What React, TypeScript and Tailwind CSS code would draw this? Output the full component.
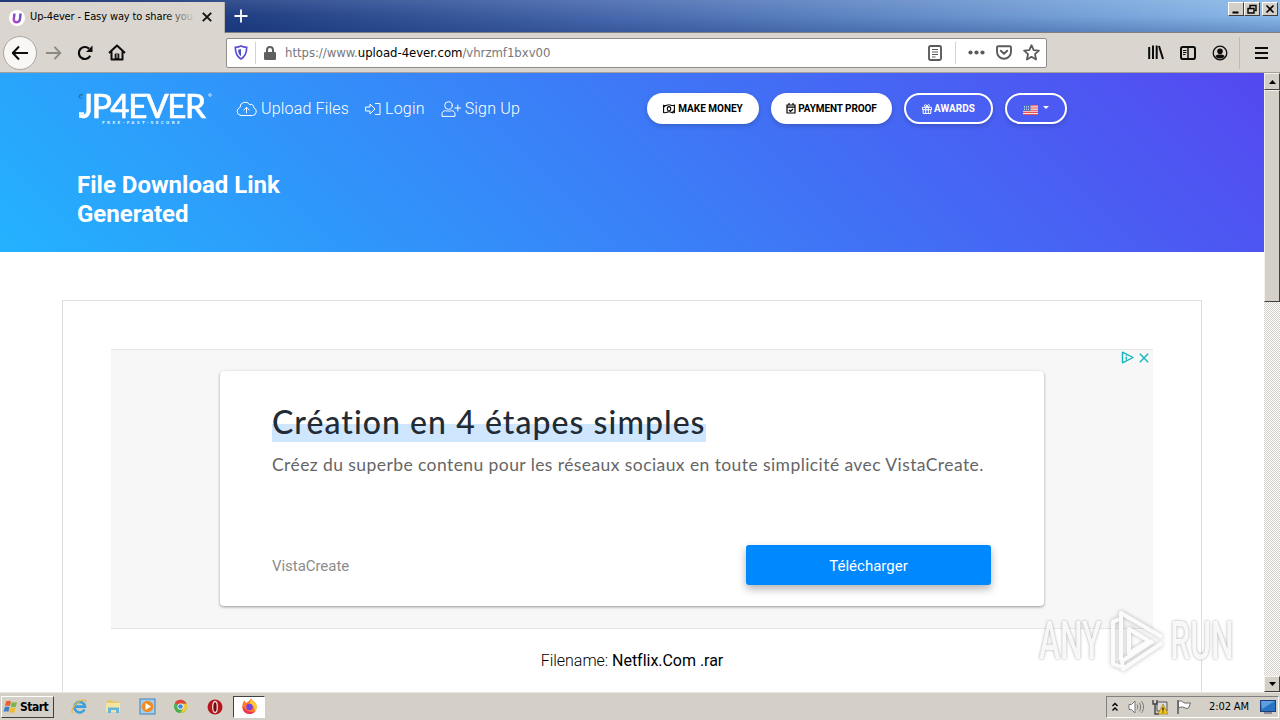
import type { ReactNode } from "react";

const tahoma = "font-['DejaVu_Sans_Condensed','DejaVu_Sans',sans-serif]";

function TabStrip() {
  return (
    <div className="h-[33px] flex shrink-0 bg-linear-to-r from-[#0a246a] via-[#4a6cb0] to-[#8ab9e9]">
      <div className="w-full h-full flex bg-linear-to-b from-white/10 via-transparent to-[#0a246a]/25 border-b border-[#7f7f7f]">
        <div className="w-[225px] h-[31px] mt-[2px] pl-[9px] flex items-center bg-[#dad6cf] border-r border-[#b7b3ab]">
          <div className="w-4 h-4 rounded-full bg-white flex items-center justify-center">
            <svg width="10" height="12" viewBox="0 0 10 12" fill="none">
              <defs>
                <linearGradient id="fav" x1="0" y1="1" x2="1" y2="0">
                  <stop stopColor="#b148c8" />
                  <stop offset="1" stopColor="#5a4fb5" />
                </linearGradient>
              </defs>
              <path d="M2.500 1.500 1.800 7c-.2 2 .8 3.200 2.900 3.200S7.800 9 8 7l.5-5.500" stroke="url(#fav)" strokeWidth="2.400" />
            </svg>
          </div>
          <div className="relative ml-[5px] mb-[2px] w-[166px] whitespace-nowrap">
            <span className={`${tahoma} text-[11px] leading-4 tracking-[-0.12px] text-black block`}>Up-4ever - Easy way to share you</span>
            <div className="absolute right-0 top-0 w-8 h-4 bg-linear-to-r from-transparent to-[#dad6cf]" />
          </div>
          <svg className="ml-[6px] mb-px" width="10" height="10" viewBox="0 0 10 10">
            <path d="M.8.8l8.400 8.400M9.200.8.8 9.200" stroke="#111" strokeWidth="1.900" />
          </svg>
        </div>
        <svg className="ml-[9px] mt-[9px]" width="14" height="14" viewBox="0 0 14 14">
          <path d="M7 .5v13M.5 7h13" stroke="#fff" strokeWidth="1.800" />
        </svg>
        <div className="ml-auto mr-[2px] mt-[2px] flex">
          <WinButton>
            <path d="M3 9.500h6" stroke="#000" strokeWidth="2" />
          </WinButton>
          <WinButton>
            <path d="M4.500 5V2.500h6v5H9M4.500 2.500h6" stroke="#000" strokeWidth="1.400" fill="none" />
            <path d="M2.500 5.500h6v4.500h-6z" stroke="#000" strokeWidth="1.400" fill="none" />
          </WinButton>
          <div className="w-[2px]" />
          <WinButton>
            <path d="M3 2.500l7 7M10 2.500l-7 7" stroke="#000" strokeWidth="1.700" />
          </WinButton>
        </div>
      </div>
    </div>
  );
}

function WinButton({ children }: { children: ReactNode }) {
  return (
    <div className="w-4 h-[14px] bg-[#d4d0c8] border border-t-white border-l-white border-r-[#404040] border-b-[#404040]">
      <svg width="14" height="12" viewBox="0 0 13 12">{children}</svg>
    </div>
  );
}

function Toolbar() {
  return (
    <div className="h-10 shrink-0 bg-[#dad6cf] border-b border-[#a5a19a] flex items-center pl-[3px]">
      <div className="w-[34px] h-[34px] rounded-full bg-[#f8f7f5] border border-[#a9a69f] flex items-center justify-center">
        <svg width="18" height="16" viewBox="0 0 18 16" fill="none" stroke="#0c0c0d" strokeWidth="2">
          <path d="M17 8H2M8 1.500 1.800 8 8 14.500" strokeLinejoin="round" />
        </svg>
      </div>
      <svg className="ml-2" width="17" height="16" viewBox="0 0 18 16" fill="none" stroke="#8c8983" strokeWidth="2">
        <path d="M1 8h15M10 1.500 16.200 8 10 14.500" />
      </svg>
      <svg className="ml-[15px]" width="17" height="16" viewBox="0 0 17 16">
        <path d="M13.200 10.800A6 6 0 1 1 12 3.600" fill="none" stroke="#0c0c0d" strokeWidth="2.200" />
        <path d="M15.500.5v6.500H9z" fill="#0c0c0d" />
      </svg>
      <svg className="ml-[14px]" width="18" height="17" viewBox="0 0 18 17" fill="none" stroke="#0c0c0d" strokeWidth="2">
        <path d="M1 9 9 1.500 17 9M3.500 7.500V15.500h11V7.500" strokeLinejoin="round" />
        <path d="M7.200 15v-5h3.600v5" fill="#0c0c0d" strokeWidth="1" />
        <path d="M9 10v4" stroke="#dad6cf" strokeWidth="1" />
      </svg>
      <div className="ml-[100px] w-[821px] h-[30px] bg-white border border-[#8f8d89] rounded-[2px] flex items-center pl-[7px]">
        <svg width="14" height="15" viewBox="0 0 14 15" fill="none">
          <path d="M7 1c2 1 3.800 1.200 5.700 1.300 0 5-.7 9-5.700 11.600C2 11.300 1.300 7.300 1.300 2.300 3.200 2.200 5 2 7 1z" stroke="#5a4fd0" strokeWidth="1.700" />
          <path d="M7 4v7.300C4.800 9.700 4.200 7.500 4.100 4.700 5.200 4.600 6 4.500 7 4z" fill="#4a50c8" />
        </svg>
        <div className="ml-[7px] w-px h-[22px] bg-[#d3d3d6]" />
        <svg className="ml-2" width="12" height="14" viewBox="0 0 12 14">
          <rect y="6" width="12" height="8" rx="1.200" fill="#5f5f60" />
          <path d="M3 7V4a3 3 0 0 1 6 0v3" fill="none" stroke="#5f5f60" strokeWidth="2" />
        </svg>
        <span className={`${tahoma} ml-[9px] mt-px w-[640px] text-[13px] leading-4 tracking-[-0.03px] text-[#77777a]`}>
          https://www.<span className="text-black">upload-4ever.com</span>/vhrzmf1bxv00
        </span>
        <svg className="ml-[3px]" width="14" height="16" viewBox="0 0 14 16" fill="none" stroke="#5b5b5d">
          <rect x="1" y="1" width="12" height="14" rx="1.500" strokeWidth="1.900" />
          <path d="M4 4.500h6M4 7h6M4 9.500h6M4 12h3.500" strokeWidth="1" />
        </svg>
        <div className="ml-[13px] w-px h-[22px] bg-[#d3d3d6]" />
        <svg className="ml-[12px]" width="17" height="5" viewBox="0 0 17 5" fill="#5b5b5d">
          <circle cx="2.500" cy="2.500" r="2.100" />
          <circle cx="8.500" cy="2.500" r="2.100" />
          <circle cx="14.500" cy="2.500" r="2.100" />
        </svg>
        <svg className="ml-[11px]" width="16" height="15" viewBox="0 0 16 15" fill="none" stroke="#5b5b5d" strokeWidth="1.900" strokeLinecap="round" strokeLinejoin="round">
          <path d="M2.200 1.200h11.600c.7 0 1.200.5 1.200 1.100v4.500a7 7 0 0 1-14 0V2.300c0-.6.500-1.100 1.200-1.100z" />
          <path d="M4.800 5.700 8 8.800l3.200-3.100" />
        </svg>
        <svg className="ml-[11px]" width="17" height="17" viewBox="0 0 17 17" fill="none" stroke="#5b5b5d" strokeWidth="1.800" strokeLinejoin="round">
          <path d="m8.500 1.200 2.200 4.900 5.200.5-3.900 3.600 1.100 5.300-4.600-2.700-4.600 2.700L5 10.200 1.100 6.600l5.200-.5z" />
        </svg>
      </div>
      <svg className="ml-[101px]" width="16" height="15" viewBox="0 0 16 15" stroke="#0c0c0d" strokeWidth="2">
        <path d="M1.200 2v12M5 .5V14M8.700.5V14M11 1l4 13" />
      </svg>
      <svg className="ml-4" width="16" height="14" viewBox="0 0 16 14" fill="none" stroke="#0c0c0d">
        <rect x="1" y="1" width="14" height="12" rx="1.800" strokeWidth="2" />
        <path d="M8 1v12" strokeWidth="1.500" />
        <path d="M3 4.500h3.500M3 6.500h3.500M3 8.500h2.500" strokeWidth="1" />
      </svg>
      <svg className="ml-4" width="16" height="16" viewBox="0 0 16 16">
        <circle cx="8" cy="8" r="6.800" fill="none" stroke="#0c0c0d" strokeWidth="1.300" />
        <circle cx="8" cy="6.200" r="2.800" fill="#0c0c0d" />
        <path d="M3.300 11.500C4 9.800 5.200 9.400 8 9.400s4 .4 4.700 2.100A6 6 0 0 1 8 13.500a6 6 0 0 1-4.700-2z" fill="#0c0c0d" />
      </svg>
      <div className="ml-[11px] w-px h-8 bg-[#bfbbb3]" />
      <svg className="ml-[15px]" width="13" height="12" viewBox="0 0 13 12" stroke="#0c0c0d" strokeWidth="2">
        <path d="M0 1h13M0 6h13M0 11h13" />
      </svg>
    </div>
  );
}

function NavItem({ label, width, children }: { label: string; width: number; children: ReactNode }) {
  return (
    <div className="flex items-center gap-1 mr-4">
      <svg width={width} height="16" viewBox={`0 0 ${width} 16`} fill="none" stroke="#fff" strokeWidth="1" strokeLinejoin="round" strokeLinecap="round">
        {children}
      </svg>
      <span className="text-base leading-6 font-light tracking-[0.18px] text-white whitespace-nowrap">{label}</span>
    </div>
  );
}

function Logo() {
  return (
    <div className="relative w-[134px] h-[34px] pt-px">
      <div className="h-[25px] ml-px origin-left scale-x-[1.04] font-['Lato',sans-serif] text-[32px] leading-[25px] font-medium tracking-[-1.4px] text-white [-webkit-text-stroke:0.5px_white] whitespace-nowrap">
        JP4EVER
      </div>
      <svg className="absolute left-0 top-0" width="134" height="30" viewBox="0 0 134 30">
        <path d="M1 6l1-3 3-.5M3 6.500l1-1" stroke="#2277a8" fill="none" strokeWidth="1.500" />
        <path d="M1 21.500h5" stroke="#fff" strokeWidth="2.500" />
        <circle cx="132" cy="3" r="1.300" fill="none" stroke="#fff" strokeWidth=".7" />
      </svg>
      <div className="ml-[24px] mt-[2px] h-[5px] font-['DejaVu_Sans',sans-serif] font-bold text-[4px] leading-[5px] tracking-[2.350px] text-[#d9f1ff] whitespace-nowrap">
        FREE-FAST-SECURE
      </div>
    </div>
  );
}

const pill = "h-[31px] rounded-full flex items-center justify-center text-[10px] font-bold whitespace-nowrap shadow-[0_2px_5px_rgba(0,0,0,0.18)]";

function Hero() {
  return (
    <header className="h-[179px] shrink-0 bg-[linear-gradient(45deg,#23b2fe_0%,#5448f0_100%)]">
      <div className="h-[71px] pl-[78px] flex items-center">
        <Logo />
        <div className="ml-6 flex items-center w-[411px]">
          <NavItem label="Upload Files" width={21}>
            <path d="M5 14.500h11.500a4 4 0 0 0 1.300-7.700 3 3 0 0 0-4.200-3.200A5.200 5.200 0 0 0 4 6.500a4.100 4.100 0 0 0 1 8zM10.500 12V6.500M7.800 9l2.700-2.700L13.200 9" />
          </NavItem>
          <NavItem label="Login" width={16}>
            <path d="M1 6h4V3l5 5-5 5v-3H1zM10.500 2.500h4.500v11h-4.500" />
          </NavItem>
          <NavItem label="Sign Up" width={20}>
            <circle cx="7.500" cy="4.500" r="3.800" />
            <path d="M1 15v-2.200C1 11 2.500 9.700 4.300 9.700c1 0 1.500.5 3.200.5s2.200-.5 3.200-.5c1.800 0 3.300 1.300 3.300 3.100V15zM16.800 4v6M13.800 7h6" />
          </NavItem>
        </div>
        <div className="flex gap-3">
          <div className={`${pill} w-[112px] bg-white text-black gap-[3px]`}>
            <svg width="12" height="10" viewBox="0 0 12 10" fill="none" stroke="#000" strokeWidth="1.100">
              <path d="M.6 1.500c2 1 3.700-.8 5.500-.7 1.800 0 3.200 1.300 5.300.4v7.300c-2 1-3.600-.8-5.400-.7-1.800 0-3.300 1.600-5.400.7z" />
              <ellipse cx="6" cy="4.800" rx="1.700" ry="2.200" />
              <path d="M.6 3.200 2.500 1.500M9.500 8.200l1.900-1.700" />
            </svg>
            MAKE MONEY
          </div>
          <div className={`${pill} w-[121px] bg-white text-black gap-[2px] tracking-[-0.1px]`}>
            <svg width="10" height="11" viewBox="0 0 10 11" fill="none" stroke="#000" strokeWidth="1.200">
              <path d="M1 2h8v8H1zM1 4.200h8M3 0v2M7 0v2M3 7l1.500 1.500L7 6" />
            </svg>
            PAYMENT PROOF
          </div>
          <div className={`${pill} w-[89px] border-2 border-white text-white gap-[2px]`}>
            <svg width="10" height="10" viewBox="0 0 10 10" fill="none" stroke="#fff" strokeWidth="1">
              <path d="M.5 3.300h9v2.400h-9zM1.200 5.700v3.800h7.600V5.700M3.700 3.300v6.200M6.300 3.300v6.200M5 3.300C2 3.300 2 .6 3.400.6S5 3.300 5 3.300 5.200.6 6.600.6 8 3.300 5 3.300z" />
            </svg>
            AWARDS
          </div>
          <div className={`${pill} w-[62px] border-2 border-white gap-[5px]`}>
            <svg className="mt-[3px]" width="15" height="10" viewBox="0 0 15 10">
              <rect width="15" height="10" fill="#f6e6ea" />
              <path d="M0 .7h15M0 3h15M0 5.200h15M0 7.400h15M0 9.500h15" stroke="#e2504f" strokeWidth="1.100" />
              <rect width="7.500" height="5.800" fill="#3f6fc4" />
              <path d="M1 1.500h6M1 3h6M1 4.500h6" stroke="#d4e6ff" strokeWidth=".8" strokeDasharray="1 1" />
            </svg>
            <svg className="mb-[3px]" width="6" height="3" viewBox="0 0 6 3">
              <path d="M0 0h6L3 3z" fill="#fff" />
            </svg>
          </div>
        </div>
      </div>
      <h1 className="ml-[77px] mt-[27px] w-[230px] text-2xl leading-[29px] font-bold text-white">
        File Download Link Generated
      </h1>
    </header>
  );
}

function Ad() {
  return (
    <div className="h-[280px] bg-[#f7f7f7] border-y border-[#e6e6e6] relative pt-[21px] font-['Lato',sans-serif]">
      <div className="absolute right-[4px] top-px flex items-center gap-[5px]">
        <svg width="13" height="13" viewBox="0 0 13 13" fill="none" stroke="#12b5bd" strokeWidth="1.400">
          <path d="M1.500 1.200v10.600L12 6.500z" strokeLinejoin="round" />
          <path d="M5.300 5.800v3M5.300 4v.8" />
        </svg>
        <svg width="10" height="10" viewBox="0 0 10 10" stroke="#12b5bd" strokeWidth="1.400">
          <path d="m.8.8 8.400 8.400M9.200.8.8 9.200" />
        </svg>
      </div>
      <div className="ml-[109px] w-[824px] h-[235px] rounded-[4px] bg-white shadow-[0_1px_3px_rgba(0,0,0,0.4)] px-[52px] pt-[34px] flex flex-col">
        <div className="h-[37px]">
          <span className="inline-block h-[37px] text-[32px] leading-[34px] font-medium tracking-[1.05px] text-[#222b33] whitespace-nowrap bg-linear-to-b from-transparent from-50% to-[#cfe6ff] to-50%">
            Création en 4 étapes simples
          </span>
        </div>
        <p className="mt-[11px] text-[17.5px] leading-6 tracking-[0.420px] text-[#666] whitespace-nowrap">
          Créez du superbe contenu pour les réseaux sociaux en toute simplicité avec VistaCreate.
        </p>
        <div className="mt-auto mb-[21px] flex items-center justify-between font-['Roboto',sans-serif] text-[15px]">
          <span className="mt-[2px] tracking-[-0.05px] text-[#8c8c8c]">VistaCreate</span>
          <div className="w-[245px] h-10 pt-[2px] mr-px rounded-[3px] bg-[#0088ff] text-white flex items-center justify-center shadow-[0_4px_9px_rgba(0,0,0,0.3)]">
            Télécharger
          </div>
        </div>
      </div>
    </div>
  );
}

function Scrollbar() {
  const bevel = "bg-[#d4d0c8] border border-t-[#f3f1ec] border-l-[#f3f1ec] border-r-[#404040] border-b-[#404040]";
  return (
    <div className="w-4 shrink-0 flex flex-col bg-[repeating-conic-gradient(#d4d0c8_0_25%,#ffffff_0_50%)] bg-[length:2px_2px]">
      <div className={`${bevel} h-[17px] flex items-center justify-center`}>
        <svg width="7" height="4" viewBox="0 0 7 4"><path d="M0 4h7L3.500 0z" /></svg>
      </div>
      <div className={`${bevel} h-[212px]`} />
      <div className={`${bevel} mt-auto h-4 flex items-center justify-center`}>
        <svg width="7" height="4" viewBox="0 0 7 4"><path d="M0 0h7L3.500 4z" /></svg>
      </div>
    </div>
  );
}

function Watermark() {
  const word = "w-[64px] flex justify-center text-[53px] leading-[54px] font-medium text-white/90 [text-shadow:0_0_3px_rgba(0,0,0,0.28),0_0_5px_rgba(0,0,0,0.12)]";
  return (
    <div className="absolute left-[1038px] top-[609px] h-[64px] flex items-center">
      <div className={word}><span className="scale-x-[0.6]">ANY</span></div>
      <svg className="mx-[3px] drop-shadow-[0_0_2px_rgba(0,0,0,0.3)]" width="62" height="64" viewBox="0 0 62 64" fill="none" stroke="#fff" strokeOpacity=".9" strokeWidth="4" strokeLinejoin="round">
        <path d="M16 51V4l41 24" />
        <path d="M57 34 18 60l-1-8 31-20" />
        <path d="M14 10 8 13v42l8 3" />
        <path d="M24 20v24l20-12z" />
      </svg>
      <div className={word}><span className="scale-x-[0.6]">RUN</span></div>
    </div>
  );
}

function Taskbar() {
  return (
    <div className={`${tahoma} h-7 shrink-0 bg-[#d4d0c8] border-t border-[#e9e6e0] flex items-center text-[11px] text-black`}>
      <div className="ml-px w-[53px] h-[22px] mt-px bg-[#d4d0c8] border border-t-white border-l-white border-r-[#404040] border-b-[#404040] flex items-center pl-px">
        <svg width="16" height="16" viewBox="0 0 16 16">
          <path d="M3 2.500c2-1.200 3.500-.8 5 0L6.900 7.200C5.400 6.400 4 6.300 2 7.200z" fill="#e8602c" />
          <path d="M8.800 3c1.700.8 3.400.8 5.200 0l-1.200 4.700c-1.800.8-3.400.7-5.100-.1z" fill="#7ab648" />
          <path d="M1.700 8.200c1.900-.9 3.300-.8 4.900 0l-1.200 4.600c-1.500-.8-3-.8-4.900 0z" fill="#3f7fc4" />
          <path d="M7.400 8.600c1.700.8 3.300.8 5.200 0l-1.300 4.600c-1.700.8-3.400.8-5.100 0z" fill="#f2bb2e" />
        </svg>
        <span className="ml-px font-bold text-[12px] tracking-[-0.5px]">Start</span>
      </div>
      <svg className="ml-[17px]" width="17" height="17" viewBox="0 0 17 17" fill="none">
        <path d="M13.500 11.500A5.300 5.300 0 1 1 14 8.600H5" stroke="#3b9fdb" strokeWidth="2.600" />
        <path d="M2 14.500C-.5 16 1 9 6 5s10-4 8.700-.5" stroke="#e7b93c" strokeWidth="1.200" />
      </svg>
      <svg className="ml-[17px]" width="17" height="17" viewBox="0 0 17 17">
        <path d="M2 2h5l1 1.500h6V14H2z" fill="#e9c866" />
        <path d="M1 5h14v9H1z" fill="#f4e3a1" />
        <path d="M3 15V9.500h11V15h-3v-3H6v3z" fill="#66b5dc" />
      </svg>
      <svg className="ml-[17px]" width="17" height="17" viewBox="0 0 17 17">
        <rect x="1" y="1" width="15" height="15" fill="#a5cdec" stroke="#3f82bd" />
        <circle cx="8.500" cy="8.500" r="5.800" fill="#ef8d22" />
        <path d="M6.500 5v7l5.500-3.500z" fill="#fff" />
      </svg>
      <svg className="ml-[17px]" width="15" height="15" viewBox="0 0 16 16">
        <circle cx="8" cy="8" r="7" fill="#4caf50" />
        <path d="M8 8 2 4a7 7 0 0 1 12.300 1H8z" fill="#e04436" />
        <path d="M8 5h6.300A7 7 0 0 1 8 15l3-5.500z" fill="#f7c933" />
        <circle cx="8" cy="8" r="3.300" fill="#fff" />
        <circle cx="8" cy="8" r="2.500" fill="#4285d8" />
      </svg>
      <svg className="ml-[19px]" width="16" height="16" viewBox="0 0 16 16">
        <circle cx="8" cy="8" r="7.500" fill="#b5161c" />
        <ellipse cx="8" cy="8" rx="2.300" ry="5.500" fill="#6d0b0e" stroke="#f1dede" strokeWidth="1.300" />
      </svg>
      <div className="ml-[10px] w-[32px] h-[22px] bg-white border border-t-[#404040] border-l-[#404040] border-r-white border-b-white flex items-center justify-center">
        <svg width="17" height="17" viewBox="0 0 17 17">
          <path d="M8.500 16A7 7 0 0 1 1.300 9C1.300 6 2 4 3.500 2.500L5 5l3-2 2-2.500C11 3 15.700 4 15.700 9a7 7 0 0 1-7.200 7z" fill="#ff7b2b" />
          <path d="M10 .5c.5 2.500 5.700 3.500 5.700 8.500 0 2-1 4-2 5 .5-5-2-7-5-8z" fill="#ffc933" />
          <path d="M1.500 8c0 5 3 8 7 8 3 0 5-1.500 6-3-4 2-9 1-13-5z" fill="#f0335a" />
          <circle cx="8.500" cy="9" r="3.200" fill="#7542e5" />
        </svg>
      </div>
      <div className="ml-auto mr-[1px] w-[173px] h-[22px] mt-px border border-t-[#808080] border-l-[#808080] border-r-white border-b-white flex items-center pl-[5px]">
        <svg width="6" height="10" viewBox="0 0 6 10" fill="none" stroke="#000" strokeWidth="1.400">
          <path d="m.5 4 2.500-2.500L5.500 4M.5 8.500 3 6l2.500 2.500" />
        </svg>
        <svg className="ml-[10px]" width="17" height="16" viewBox="0 0 17 16" fill="none" stroke="#777">
          <path d="M1 5.500h2.500L7 2v12l-3.500-3.500H1z" fill="#fff" />
          <path d="M9 5.500c1 1.500 1 3.500 0 5M11.300 3.800c1.800 2.500 1.800 6 0 8.500M13.500 2.200c2.700 3.500 2.700 8.100 0 11.600" />
        </svg>
        <svg className="ml-[7px]" width="16" height="16" viewBox="0 0 16 16">
          <path d="M5 3h10v9H5z" fill="#ddd" stroke="#555" />
          <path d="M1 1v4h4V1M3 5v10h4" fill="none" stroke="#444" strokeWidth="1.400" />
          <path d="m11 5 5 10H6z" fill="#f7c81f" stroke="#8d720e" strokeWidth=".6" />
          <path d="M11 8.500v3M11 12.500v1" stroke="#000" strokeWidth="1.200" />
        </svg>
        <svg className="ml-[8px]" width="16" height="16" viewBox="0 0 16 16">
          <path d="M2.500 2.500c3-1.500 4 .5 6 1.500h6l-2 5c-2 1.500-4-.8-6-1-1.500 0-3 .5-4 1z" fill="#fff" stroke="#666" />
          <path d="M2 1v14" stroke="#666" strokeWidth="1.700" />
        </svg>
        <span className="ml-[17px] w-[41px] whitespace-nowrap tracking-[-0.1px]">2:02 AM</span>
        <svg className="ml-[10px]" width="16" height="14" viewBox="0 0 16 14">
          <rect x=".5" y=".5" width="15" height="11" fill="#2873c4" stroke="#183f78" />
          <path d="M1 1h14L2 9z" fill="#5da0df" />
          <path d="M4 13h8" stroke="#446" />
        </svg>
      </div>
    </div>
  );
}

export default function App() {
  return (
    <div className="relative w-[1280px] h-[720px] overflow-hidden flex flex-col bg-white font-['Roboto',sans-serif]">
      <TabStrip />
      <Toolbar />
      <div className="h-[619px] shrink-0 flex overflow-hidden">
        <main className="w-[1264px] flex flex-col">
          <Hero />
          <section className="mx-[62px] mt-12 h-[600px] shrink-0 border border-[#dedede] p-12">
            <Ad />
            <p className="mt-5 text-center text-base leading-6 tracking-[-0.03px] text-black">
              <span className="font-light">Filename:</span> Netflix.Com .rar
            </p>
          </section>
        </main>
        <Scrollbar />
      </div>
      <Taskbar />
      <Watermark />
    </div>
  );
}
